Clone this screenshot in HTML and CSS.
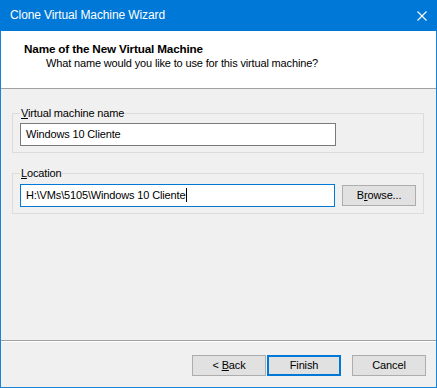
FILE: index.html
```html
<!DOCTYPE html>
<html lang="en">
<head>
	<meta charset="UTF-8">
	<title>Clone Virtual Machine Wizard</title>
	<link rel="stylesheet" href="styles.css">
</head>
<body>
	<div class="window">
		<div class="titlebar">
			<span class="title">Clone Virtual Machine Wizard</span>
			<svg class="close" width="10" height="10" viewBox="0 0 10 10">
				<path d="M0.5 0.5 L9.5 9.5 M9.5 0.5 L0.5 9.5" stroke="#fff" stroke-width="1.1" fill="none"/>
			</svg>
		</div>

		<div class="header">
			<div class="header-title">Name of the New Virtual Machine</div>
			<div class="header-sub">What name would you like to use for this virtual machine?</div>
		</div>

		<div class="content">
			<fieldset class="group">
				<legend><u>V</u>irtual machine name</legend>
				<div class="field">Windows 10 Cliente</div>
			</fieldset>

			<fieldset class="group group-location">
				<legend><u>L</u>ocation</legend>
				<div class="row">
					<div class="field field-focus">H:\VMs\5105\Windows 10 Cliente<span class="caret"></span></div>
					<div class="button browse">B<u>r</u>owse...</div>
				</div>
			</fieldset>
		</div>

		<div class="footer">
			<div class="button">&lt; <u>B</u>ack</div>
			<div class="button button-default">Finish</div>
			<div class="button button-cancel">Cancel</div>
		</div>
	</div>
</body>
</html>
```

FILE: styles.css
```css
body {
	margin: 0;
	padding: 0;
	background-color: #fff;
	font-family: "Liberation Sans", Arial, sans-serif;
	font-size: 11px;
	letter-spacing: -0.15px;
	color: #000;
}

.window {
	display: flex;
	flex-direction: column;
	width: 437px;
	height: 388px;
	box-sizing: border-box;
	border: 1px solid #1883d7;
	border-top: none;
	background-color: #f0f0f0;
}

/* title bar */
.titlebar {
	display: flex;
	align-items: center;
	justify-content: space-between;
	height: 31px;
	margin: 0 -1px;
	padding: 0 10px 0 10px;
	background-color: #0078d7;
	color: #fff;
	font-size: 12px;
	letter-spacing: -0.1px;
	line-height: 31px;
}
.close {
	display: block;
}

/* white header */
.header {
	height: 58px;
	box-sizing: border-box;
	padding-top: 10px;
	background-color: #fff;
	border-bottom: 1px solid #a0a0a0;
}
.header-title {
	padding-left: 23px;
	font-size: 11.7px;
	font-weight: bold;
	line-height: 15px;
}
.header-sub {
	padding-left: 45px;
	line-height: 15px;
}

/* groups */
.content {
	flex: 1;
	padding: 17px 12px 0 11px;
}
.group {
	margin: 0;
	padding: 3px 7px 6px 7px;
	border: 1px solid #dcdcdc;
	min-width: 0;
}
.group legend {
	padding: 0 1px;
	line-height: 14px;
}
.group-location {
	margin-top: 13px;
	padding-top: 4px;
}

.field {
	width: 316px;
	height: 23px;
	box-sizing: border-box;
	padding: 0 5px;
	border: 1px solid #7a7a7a;
	background-color: #fff;
	line-height: 20px;
	white-space: nowrap;
}
.field-focus {
	border-color: #0078d7;
}
.caret {
	display: inline-block;
	width: 1px;
	height: 14px;
	margin-left: 1px;
	vertical-align: -3px;
	background-color: #000;
}

.row {
	display: flex;
	align-items: flex-start;
	gap: 7px;
}

/* buttons */
.button {
	width: 74px;
	height: 21px;
	box-sizing: border-box;
	border: 1px solid #adadad;
	background-color: #e1e1e1;
	text-align: center;
	line-height: 19px;
}
.browse {
	margin-top: 1px;
}
.button-default {
	border: 2px solid #0078d7;
	line-height: 17px;
}

/* footer */
.footer {
	display: flex;
	justify-content: flex-end;
	gap: 1px;
	height: 47px;
	box-sizing: border-box;
	padding: 14px 10px 0 0;
	border-top: 1px solid #a0a0a0;
	box-shadow: inset 0 1px 0 #fff;
}
.button-cancel {
	margin-left: 10px;
}
```
